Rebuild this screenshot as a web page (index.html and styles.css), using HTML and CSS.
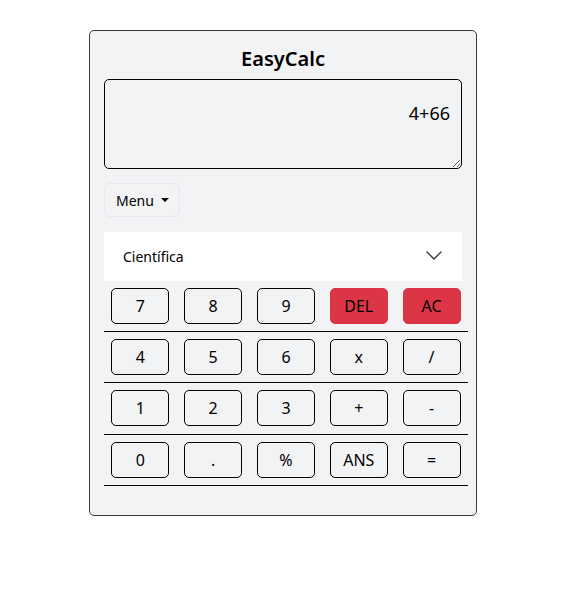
FILE: index.html
```html
<!DOCTYPE html>
<html lang="es">
<head>
<meta charset="utf-8">
<title>EasyCalc</title>
<link rel="stylesheet" href="styles.css">
</head>
<body>
<div class="page">
  <div class="card">
    <h1 class="title">EasyCalc</h1>
    <textarea class="display">4+66</textarea>
    <button class="menu-btn">Menu <span class="caret"></span></button>
    <div class="select">
      <span class="select-text">Científica</span>
      <svg class="chevron" width="16" height="9" viewBox="0 0 16 9"><path d="M1 1 L8 8 L15 1" fill="none" stroke="#343a40" stroke-width="1.4" stroke-linecap="round" stroke-linejoin="round"/></svg>
    </div>
    <div class="keypad">
      <div class="row">
        <button class="key">7</button>
        <button class="key">8</button>
        <button class="key">9</button>
        <button class="key danger">DEL</button>
        <button class="key danger">AC</button>
      </div>
      <div class="row">
        <button class="key">4</button>
        <button class="key">5</button>
        <button class="key">6</button>
        <button class="key">x</button>
        <button class="key">/</button>
      </div>
      <div class="row">
        <button class="key">1</button>
        <button class="key">2</button>
        <button class="key">3</button>
        <button class="key">+</button>
        <button class="key">-</button>
      </div>
      <div class="row">
        <button class="key">0</button>
        <button class="key">.</button>
        <button class="key">%</button>
        <button class="key">ANS</button>
        <button class="key">=</button>
      </div>
    </div>
  </div>
</div>
</body>
</html>
```
FILE: styles.css
```css
* { box-sizing: border-box; }
body {
  margin: 0;
  background: #fff;
  font-family: "Noto Sans", "Open Sans", sans-serif;
  color: #000;
}
.page {
  padding: 30px 0 0 89px;
}
.card {
  width: 388px;
  background: #f2f3f5;
  border: 1px solid #3a3a3a;
  border-radius: 5px;
  padding: 14px 14px 14px 14px;
}
.title {
  margin: 0 0 6px;
  font-size: 20px;
  line-height: 28px;
  font-weight: 600;
  text-align: center;
  color: #000;
}
.display {
  display: block;
  width: 100%;
  height: 90px;
  border: 1px solid #000;
  border-radius: 5px;
  background: #f2f3f5;
  padding: 20px 11px 0 11px;
  font-family: "Noto Sans", "Open Sans", sans-serif;
  font-size: 18px;
  line-height: 27px;
  text-align: right;
  color: #000;
  resize: vertical;
  margin: 0;
}
.menu-btn {
  display: flex;
  align-items: center;
  margin-top: 14px;
  height: 34px;
  width: 76px;
  padding: 0 11px;
  border: 1px solid #e6e8eb;
  border-radius: 6px;
  background: #f2f3f5;
  font-family: "Noto Sans", "Open Sans", sans-serif;
  font-size: 14px;
  color: #000;
}
.caret {
  display: inline-block;
  margin-left: 7px;
  width: 0;
  height: 0;
  border-left: 4px solid transparent;
  border-right: 4px solid transparent;
  border-top: 4px solid #000;
}
.select {
  margin-top: 15px;
  height: 49px;
  background: #fff;
  display: flex;
  align-items: center;
  justify-content: space-between;
  padding: 0 20px 0 19px;
  font-size: 14px;
  color: #000;
}
.chevron { display: block; margin-top: -2px; }
.keypad {
  width: 364px;
  margin-bottom: 15px;
}
.row {
  display: grid;
  grid-template-columns: repeat(5, 1fr);
  padding: 7px 0 7.2px;
  border-bottom: 1px solid #000;
}
.key {
  justify-self: center;
  width: 58px;
  height: 36px;
  border: 1px solid #000;
  border-radius: 5px;
  background: #f2f3f5;
  font-family: "Noto Sans", "Open Sans", sans-serif;
  font-size: 16px;
  color: #000;
  padding: 0;
}
.key.danger {
  background: #dc3545;
  border-color: #dc3545;
}
```
